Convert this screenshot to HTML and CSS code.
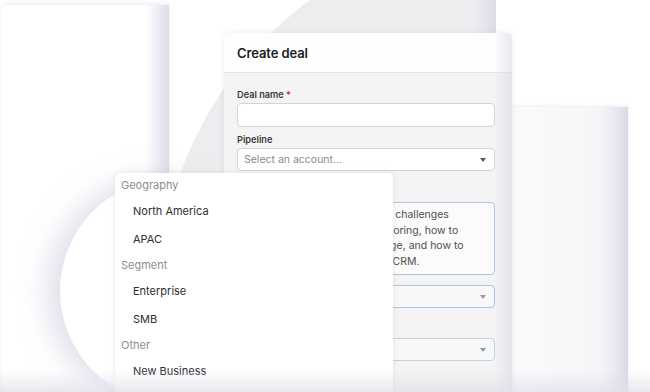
FILE: index.html
```html
<!DOCTYPE html>
<html lang="en">
<head>
<meta charset="utf-8">
<title>Create deal</title>
<link rel="stylesheet" href="styles.css">
</head>
<body>
<div class="scene">
  <div class="back-card"><div class="gray-disc"></div></div>
  <div class="left-card"></div>
  <div class="white-disc"></div>
  <div class="right-card"></div>

  <section class="modal">
    <header class="modal-head"><h1 class="title">Create deal</h1></header>
    <div class="modal-body">
      <div class="field">
        <label class="label">Deal name <span class="req">*</span></label>
        <div class="input"></div>
      </div>
      <div class="field">
        <label class="label">Pipeline</label>
        <div class="input select"><span class="placeholder">Select an account...</span><span class="caret"></span></div>
      </div>
      <div class="field field-desc">
        <label class="label">Notes</label>
        <div class="textarea">We discussed all their biggest challenges<br>with their slow manual lead scoring, how to<br>increase their pipeline coverage, and how to<br>migrate their old data into the CRM.</div>
        <div class="input select focus"><span class="caret"></span></div>
      </div>
      <div class="field">
        <label class="label">Owner</label>
        <div class="input select focus soft"><span class="caret"></span></div>
      </div>
    </div>
  </section>

  <ul class="dropdown">
    <li class="group">Geography</li>
    <li class="option">North America</li>
    <li class="option">APAC</li>
    <li class="group">Segment</li>
    <li class="option">Enterprise</li>
    <li class="option">SMB</li>
    <li class="group">Other</li>
    <li class="option">New Business</li>
  </ul>

  <div class="fade"></div>
</div>
</body>
</html>
```

FILE: styles.css
```css
* { box-sizing: border-box; }
html, body { margin: 0; padding: 0; }
body {
  width: 650px;
  height: 392px;
  overflow: hidden;
  background: #ffffff;
  font-family: Inter, "Noto Sans", "Liberation Sans", sans-serif;
}
.scene {
  position: relative;
  width: 650px;
  height: 392px;
  overflow: hidden;
}

/* background canvas layers */
.back-card {
  position: absolute;
  left: 170px;
  top: -10px;
  width: 326px;
  height: 420px;
  background: #ffffff;
  overflow: hidden;
}
.back-card::after {
  content: "";
  position: absolute;
  top: 0; right: 0; bottom: 0;
  width: 20px;
  background: linear-gradient(to right, rgba(230,230,238,0), rgba(218,218,230,0.9));
}
.gray-disc {
  position: absolute;
  left: -12px;
  top: -62px;
  width: 744px;
  height: 744px;
  border-radius: 50%;
  background: #ededef;
}
.left-card {
  position: absolute;
  left: 2px;
  top: 5px;
  width: 167px;
  height: 400px;
  border-radius: 6px 0 0 0;
  background: linear-gradient(to right, #ffffff 0%, #ffffff 86%, #ebebf3 94%, #dcdce8 100%);
  box-shadow: 0 -2px 4px rgba(225,225,235,0.5);
}
.white-disc {
  position: absolute;
  left: 60px;
  top: 178px;
  width: 226px;
  height: 226px;
  border-radius: 50%;
  background: #ffffff;
  box-shadow: -14px 0 26px rgba(200,200,222,0.55);
}
.right-card {
  position: absolute;
  left: 513px;
  top: 107px;
  width: 115px;
  height: 300px;
  background: linear-gradient(to right, #fbfbfd 0%, #f6f6f9 75%, #eaeaf1 88%, #d9d9e4 100%);
  box-shadow: 0 -1px 3px rgba(225,225,235,0.6);
}

/* modal */
.modal {
  position: absolute;
  left: 224px;
  top: 33px;
  width: 288px;
  height: 370px;
  border-radius: 5px 5px 0 0;
  background: #f4f4f4;
  overflow: hidden;
  box-shadow: 0 0 6px rgba(200,200,212,0.35);
}
.modal::after {
  content: "";
  position: absolute;
  top: 0; right: 0; bottom: 0;
  width: 18px;
  background: linear-gradient(to right, rgba(225,225,232,0), rgba(214,214,224,0.55));
  pointer-events: none;
}
.modal-head {
  height: 40px;
  display: flex;
  align-items: center;
  padding: 0 13px;
  background: #fefefe;
  border-bottom: 1px solid #e4e4e6;
}
.title {
  margin: 0;
  font-size: 13px;
  font-weight: 600;
  color: #1c1c1e;
  letter-spacing: -0.1px;
}
.modal-body {
  padding: 16px 17px 0 13px;
  display: flex;
  flex-direction: column;
}
.field {
  display: flex;
  flex-direction: column;
  margin-bottom: 7px;
}
.label {
  font-size: 9.2px;
  font-weight: 600;
  color: #3a3a3c;
  line-height: 12px;
  height: 12px;
  margin-bottom: 2px;
}
.req { color: #c0392b; }
.input {
  height: 24px;
  flex: none;
  background: #ffffff;
  border: 1px solid #d4d4d6;
  border-radius: 4px;
}
.select {
  display: flex;
  align-items: center;
  justify-content: space-between;
  padding: 0 8px 0 6px;
  height: 23px;
}
.placeholder {
  font-size: 10.5px;
  color: #8a8a8c;
}
.caret {
  margin-left: auto;
  width: 0;
  height: 0;
  border-left: 3px solid transparent;
  border-right: 3px solid transparent;
  border-top: 4px solid #5a5a5c;
}
.focus { border-color: #aac6e2; background: #f8f8f8; }
.focus .caret { border-top-color: #9a9a9c; }
.soft { border-color: #bcd2e8; }
.field-desc { margin-top: 10px; margin-bottom: 16px; }
.textarea {
  height: 73px;
  flex: none;
  background: #fbfbfb;
  border: 1px solid #aac6e2;
  border-radius: 4px;
  padding: 4px 6px;
  font-size: 10.5px;
  line-height: 15.5px;
  color: #4f4f52;
  white-space: nowrap;
  overflow: hidden;
  margin-bottom: 10px;
}

/* dropdown menu overlay */
.dropdown {
  position: absolute;
  left: 115px;
  top: 173px;
  width: 278px;
  height: 240px;
  margin: 0;
  padding: 0;
  list-style: none;
  background: #ffffff;
  border-radius: 5px 5px 0 0;
  box-shadow: 0 0 5px rgba(190,190,200,0.35);
}
.dropdown li {
  display: flex;
  align-items: center;
  font-size: 11px;
}
.group {
  height: 24px;
  padding-left: 6px;
  color: #8d8d90;
}
.option {
  height: 28px;
  padding-left: 18px;
  color: #2e2e30;
}

.fade {
  position: absolute;
  left: 0; right: 0; bottom: 0;
  height: 22px;
  background: linear-gradient(to bottom, rgba(228,228,236,0), rgba(224,224,234,0.75));
  pointer-events: none;
}
```
